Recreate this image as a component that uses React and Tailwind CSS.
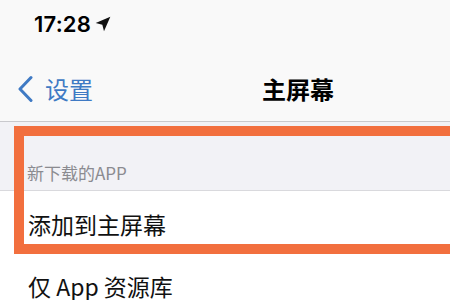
import React from "react";

export default function App() {
  const cjk = { fontFamily: '"Noto Sans CJK SC", "Noto Sans", sans-serif' };
  return (
    <div className="relative w-[450px] h-[300px] overflow-hidden bg-white" style={cjk}>
      {/* header */}
      <div className="bg-[#f9f9f9] border-b border-[#c9c9cd]">
        <div className="h-[44px] flex items-center pl-[34px] pt-[4px]">
          <span
            className="text-[22px] font-semibold text-black leading-none tracking-[0.2px]"
            style={{ fontFamily: 'Inter, "Liberation Sans", sans-serif' }}
          >
            17:28
          </span>
          <svg width="16" height="16" viewBox="0 0 24 24" className="ml-[4px]">
            <path d="M23 1 L1 10.5 L11 13 L13.5 23 Z" fill="#111" />
          </svg>
        </div>
        <div className="h-[77px] flex items-start pt-[31px]">
          <div className="flex items-center pl-[17px] text-[#3f7ac4]">
            <svg width="16" height="28" viewBox="0 0 16 28">
              <polyline points="14,2.5 3,14 14,25.5" fill="none" stroke="#3f7ac4" strokeWidth="3" strokeLinecap="round" strokeLinejoin="round" />
            </svg>
            <span className="ml-[12px] text-[24px] leading-[28px]">设置</span>
          </div>
          <span className="ml-[169px] text-[24px] leading-[28px] font-semibold text-black">主屏幕</span>
        </div>
      </div>
      {/* section header */}
      <div className="h-[69px] bg-[#f2f2f6] flex items-end pb-[5px] pl-[27px] border-b border-[#d9d9dd]">
        <span className="text-[17px] leading-[24px] text-[#8b8b90]">新下载的APP</span>
      </div>
      {/* rows */}
      <div className="h-[62px] flex items-center pt-[3px] pl-[28px] bg-white">
        <span className="text-[23px] leading-[30px] text-[#111]">添加到主屏幕</span>
      </div>
      <div className="ml-[28px] h-px bg-[#e4e4e6]" />
      <div className="h-[64px] flex items-center pl-[28px] bg-white">
        <span className="text-[23px] leading-[30px] text-[#111]">仅 App 资源库</span>
      </div>
      {/* highlight box overlay (right edge runs off the picture) */}
      <div className="absolute left-[14px] w-[600px] top-[126px] h-[10px] bg-[#f26f3e]" />
      <div className="absolute left-[14px] w-[10px] top-[126px] h-[128px] bg-[#f26f3e]" />
      <div className="absolute left-[14px] w-[600px] top-[244px] h-[10px] bg-[#f26f3e]" />
    </div>
  );
}
